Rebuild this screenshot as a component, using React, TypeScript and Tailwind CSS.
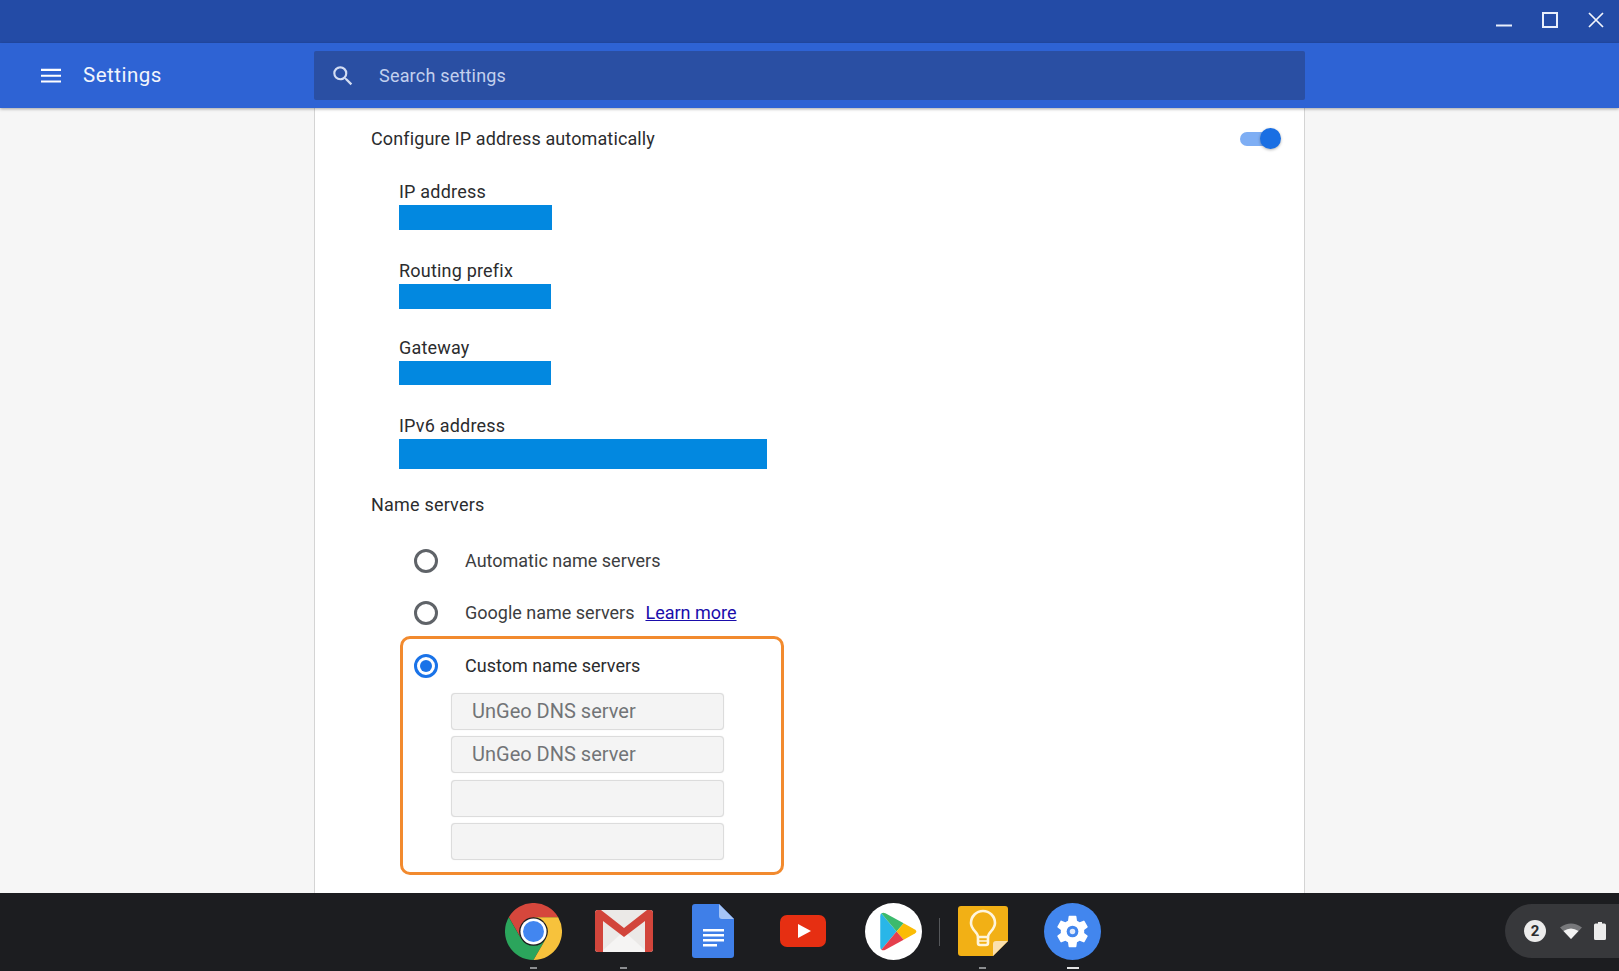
import React from "react";

const font = { fontFamily: "Roboto, 'Liberation Sans', sans-serif" };

function Radio({ checked }: { checked?: boolean }) {
  return (
    <span
      className={
        "flex h-[24px] w-[24px] shrink-0 items-center justify-center rounded-full border-[3px] " +
        (checked ? "border-[#1a73e8]" : "border-[#5f6368]")
      }
    >
      {checked && <span className="h-[12px] w-[12px] rounded-full bg-[#1a73e8]" />}
    </span>
  );
}

function Field({ label, bar, className }: { label: string; bar: string; className?: string }) {
  return (
    <div className={"ml-[28px] " + (className ?? "")}>
      <div className="h-[24px] text-[18px] leading-[24px] tracking-[0.2px] text-[#2b2c2e]">{label}</div>
      <div className={"mt-[1px] bg-[#0288e0] " + bar} />
    </div>
  );
}

function DnsInput({ value }: { value?: string }) {
  return (
    <div className="ml-[48px] h-[37px] w-[273px] rounded-[4px] border border-[#dcdcdc] bg-[#f4f4f4] pl-[20px] text-[20px] leading-[35px] text-[#727477] shadow-[0_0_1px_rgba(0,0,0,0.15)]">
      {value}
    </div>
  );
}

function ChromeIcon() {
  return (
    <svg viewBox="0 0 48 48" className="h-[57px] w-[57px]">
      <path d="M3.2 12A24 24 0 0 1 44.8 12H24A12 12 0 0 0 13.6 30Z" fill="#d5473c" />
      <path d="M3.2 12A24 24 0 0 0 24 48L34.4 30A12 12 0 0 1 13.6 30Z" fill="#2ba55c" />
      <path d="M44.8 12A24 24 0 0 1 24 48L34.4 30A12 12 0 0 0 24 12Z" fill="#f7c23c" />
      <circle cx="24" cy="24" r="11" fill="#fff" />
      <circle cx="24" cy="24" r="8.8" fill="#4286f0" />
    </svg>
  );
}

function GmailIcon() {
  return (
    <svg viewBox="0 0 58 44" className="h-[44px] w-[58px]">
      <rect x="0" y="1" width="58" height="42" rx="3" fill="#ebe9e7" />
      <path d="M6 43 29 22 52 43Z" fill="#f5f4f3" />
      <path d="M0 4Q0 1 3 1H6L29 19 52 1H55Q58 1 58 4V40Q58 43 55 43H50V12L29 28 8 12V43H3Q0 43 0 40Z" fill="#d2453b" />
    </svg>
  );
}

function DocsIcon() {
  return (
    <svg viewBox="0 0 42 54" className="h-[54px] w-[42px]">
      <path d="M3 0H27L42 15V51Q42 54 39 54H3Q0 54 0 51V3Q0 0 3 0Z" fill="#3f7fe8" />
      <path d="M27 0 42 15H30Q27 15 27 12Z" fill="#a5c4f6" />
      <path d="M11 25H32V27.5H11ZM11 30H32V32.500H11ZM11 35H32V37.500H11ZM11 40H25V42.500H11Z" fill="#fff" />
    </svg>
  );
}

function YoutubeIcon() {
  return (
    <svg viewBox="0 0 46 32" className="h-[32px] w-[46px]">
      <rect width="46" height="32" rx="7" fill="#e62f12" />
      <path d="M18 9 31 16 18 23Z" fill="#fff" />
    </svg>
  );
}

function PlayIcon() {
  return (
    <svg viewBox="0 0 56 56" className="h-[57px] w-[57px]">
      <circle cx="28" cy="28" r="28" fill="#fff" />
      <path d="M16 10 31 28 16 46Q15 45 15 43V13Q15 11 16 10Z" fill="#29b6e8" />
      <path d="M16 10Q18 9 20 10L38 20 31 28Z" fill="#3cba6d" />
      <path d="M38 20 49 26Q52 28 49 30L38 36 31 28Z" fill="#fbbc05" />
      <path d="M16 46Q18 47 20 46L38 36 31 28Z" fill="#e53f4d" />
    </svg>
  );
}

function KeepIcon() {
  return (
    <svg viewBox="0 0 50 50" className="h-[50px] w-[50px]">
      <path d="M3 0H47Q50 0 50 3V35L35 50H3Q0 50 0 47V3Q0 0 3 0Z" fill="#f2b015" />
      <path d="M50 35 35 50V38Q35 35 38 35Z" fill="#fbe0ae" />
      <path
        d="M20 31C20 26 13 24 13 17A12 12 0 0 1 37 17C37 24 30 26 30 31Z"
        fill="none"
        stroke="#fff5dc"
        strokeWidth="2.600"
        strokeLinejoin="round"
      />
      <path d="M20 31V37Q20 39 22 39H28Q30 39 30 37V31" fill="none" stroke="#fff5dc" strokeWidth="2.600" />
      <path d="M20 35H30" stroke="#fff5dc" strokeWidth="1.500" />
    </svg>
  );
}

function SettingsIcon() {
  return (
    <svg viewBox="0 0 56 56" className="h-[57px] w-[57px]">
      <circle cx="28" cy="28" r="28" fill="#4286ee" />
      <g transform="translate(8.800 8.800) scale(1.600)">
        <path
          fill="#fff"
          d="M19.14 12.94c.04-.3.06-.61.06-.94 0-.32-.02-.64-.07-.94l2.03-1.58a.49.49 0 0 0 .12-.61l-1.92-3.32a.488.488 0 0 0-.59-.22l-2.39.96c-.5-.38-1.03-.7-1.62-.94l-.36-2.54a.484.484 0 0 0-.48-.41h-3.84c-.24 0-.43.17-.47.41l-.36 2.54c-.59.24-1.13.57-1.62.94l-2.39-.96c-.22-.08-.47 0-.59.22L2.74 8.87c-.12.21-.08.47.12.61l2.03 1.58c-.05.3-.09.63-.09.94s.02.64.07.94l-2.03 1.58a.49.49 0 0 0-.12.61l1.92 3.32c.12.22.37.29.59.22l2.39-.96c.5.38 1.03.7 1.62.94l.36 2.54c.05.24.24.41.48.41h3.84c.24 0 .44-.17.47-.41l.36-2.54c.59-.24 1.13-.56 1.62-.94l2.39.96c.22.08.47 0 .59-.22l1.92-3.32c.12-.22.07-.47-.12-.61l-2.01-1.58z"
        />
        <circle cx="12" cy="12" r="3.600" fill="#4286ee" />
        <circle cx="12" cy="12" r="1.700" fill="#dfe9fb" />
      </g>
    </svg>
  );
}

function DockItem({ children, mark }: { children: React.ReactNode; mark?: "dim" | "on" }) {
  return (
    <div className="relative flex h-[78px] w-[89.800px] items-center justify-center pb-[2px]">
      {children}
      {mark && (
        <span
          className={
            "absolute bottom-[2px] h-[2px] " +
            (mark === "on" ? "w-[12px] bg-[#e4e4e4]" : "w-[7px] bg-[#8b8d90]")
          }
        />
      )}
    </div>
  );
}

export default function App() {
  return (
    <div className="flex h-[971px] w-[1619px] flex-col overflow-hidden bg-[#f6f6f6]" style={font}>
      {/* window title bar */}
      <div className="flex h-[43px] shrink-0 items-start justify-end bg-[#234ba6] text-white">
        <svg viewBox="0 0 16 3" className="mt-[24px] mr-[30px] h-[3px] w-[16px]">
          <rect width="16" height="2" y="0.500" fill="#e8eefb" />
        </svg>
        <svg viewBox="0 0 16 16" className="mt-[12px] mr-[30px] h-[16px] w-[16px]">
          <rect x="1" y="1" width="14" height="14" fill="none" stroke="#e8eefb" strokeWidth="2" />
        </svg>
        <svg viewBox="0 0 16 16" className="mt-[12px] mr-[15px] h-[16px] w-[16px]">
          <path d="M1 1 15 15M15 1 1 15" fill="none" stroke="#f2f5fc" strokeWidth="1.700" />
        </svg>
      </div>

      {/* settings header */}
      <div className="relative z-10 flex h-[65px] shrink-0 items-center bg-[#2e63d4] shadow-[0_1px_3px_rgba(0,0,0,0.35)]">
        <div className="flex w-[314px] items-center pl-[39px] text-white">
          <svg viewBox="0 0 24 18" className="h-[15px] w-[24px]">
            <path d="M0 1H24V3.500H0ZM0 8H24V10.500H0ZM0 15H24V17.500H0Z" fill="#fff" />
          </svg>
          <span className="ml-[20px] text-[20.500px] tracking-[0.5px] text-[#f2f5fc]">Settings</span>
        </div>
        <div className="flex h-[49px] w-[991px] items-center rounded-[2px] bg-[#2a4fa3] pl-[16px] text-[#c2d0ee]">
          <svg viewBox="0 0 24 24" className="h-[26px] w-[26px]">
            <path
              fill="#d3ddf3"
              d="M15.5 14h-.79l-.28-.27A6.47 6.47 0 0 0 16 9.500 6.500 6.500 0 1 0 9.500 16c1.610 0 3.090-.59 4.230-1.570l.27.28v.79l5 4.990L20.490 19l-4.990-5zm-6 0C7.010 14 5 11.990 5 9.500S7.010 5 9.500 5 14 7.010 14 9.500 11.990 14 9.500 14z"
            />
          </svg>
          <span className="ml-[23px] text-[18px] tracking-[0.2px]">Search settings</span>
        </div>
      </div>

      {/* page */}
      <div className="flex min-h-0 flex-1 justify-start overflow-hidden pl-[314px]">
        <div className="h-full w-[991px] border-x border-[#d4d4d4] bg-white pl-[56px] pr-[24px]">
          <div className="flex h-[60px] items-center justify-between pt-[1px]">
            <span className="text-[18px] tracking-[0.12px] text-[#2b2c2e]">Configure IP address automatically</span>
            <span className="relative mr-[3px] block h-[14px] w-[37px] rounded-full bg-[#7eaef4]">
              <span className="absolute -top-[3.5px] -right-[4px] h-[21px] w-[21px] rounded-full bg-[#1a6fe3] shadow-[0_1px_3px_rgba(0,0,0,0.3)]" />
            </span>
          </div>

          <div className="mt-[12px] flex flex-col gap-[29px]">
            <Field label="IP address" bar="h-[25px] w-[153px]" />
            <Field label="Routing prefix" bar="h-[25px] w-[152px]" />
            <Field label="Gateway" bar="h-[24px] w-[152px]" className="-mt-[2px]" />
            <Field label="IPv6 address" bar="h-[30px] w-[368px]" />
          </div>

          <div className="mt-[24px] h-[24px] text-[18px] leading-[24px] tracking-[0.2px] text-[#2b2c2e]">Name servers</div>

          <div className="mt-[15px] ml-[43px] flex h-[57px] items-center gap-[27px] text-[18px] text-[#3c3d40]">
            <Radio />
            <span>Automatic name servers</span>
          </div>
          <div className="ml-[43px] flex h-[47px] items-center gap-[27px] text-[18px] text-[#3c3d40]">
            <Radio />
            <span>Google name servers</span>
            <span className="-ml-[16px] text-[#1a0dab] underline">Learn more</span>
          </div>

          <div className="ml-[29px] h-[239px] w-[384px] rounded-[10px] border-[3px] border-[#f28a2e]">
            <div className="flex h-[53px] items-center gap-[27px] pl-[11px] text-[18px] text-[#2b2c2e]">
              <Radio checked />
              <span>Custom name servers</span>
            </div>
            <div className="mt-[1px] flex flex-col gap-[6.300px]">
              <DnsInput value="UnGeo DNS server" />
              <DnsInput value="UnGeo DNS server" />
              <DnsInput />
              <DnsInput />
            </div>
          </div>
        </div>
      </div>

      {/* shelf */}
      <div className="relative z-10 flex h-[78px] shrink-0 items-center bg-[#1c1d20] pl-[489px]">
        <DockItem mark="dim"><ChromeIcon /></DockItem>
        <DockItem mark="dim"><GmailIcon /></DockItem>
        <DockItem><DocsIcon /></DockItem>
        <DockItem><YoutubeIcon /></DockItem>
        <DockItem><PlayIcon /></DockItem>
        <DockItem mark="dim"><KeepIcon /></DockItem>
        <DockItem mark="on"><SettingsIcon /></DockItem>
        <span className="absolute left-[939px] top-[25px] h-[28px] w-[1px] bg-[#55575a]" />
        <div className="absolute top-[11px] right-0 flex h-[54px] w-[114px] items-center rounded-l-[27px] bg-[#37383b] pl-[19px]">
          <span className="flex h-[22px] w-[22px] items-center justify-center rounded-full bg-[#ececec] text-[15px] font-bold text-[#2b2c2e]">
            2
          </span>
          <svg viewBox="0 0 22 16" className="ml-[14px] h-[16px] w-[22px]">
            <path d="M0 4.500Q11 -3.500 22 4.500L11 16Z" fill="#77787b" />
            <path d="M3.500 8Q11 3 18.500 8L11 16Z" fill="#f2f2f2" />
          </svg>
          <svg viewBox="0 0 12 18" className="ml-[12px] h-[18px] w-[12px]">
            <path d="M4 0H8V1.500H10.500Q12 1.500 12 3V16.500Q12 18 10.500 18H1.500Q0 18 0 16.500V3Q0 1.500 1.500 1.500H4Z" fill="#ececec" />
          </svg>
        </div>
      </div>
    </div>
  );
}
